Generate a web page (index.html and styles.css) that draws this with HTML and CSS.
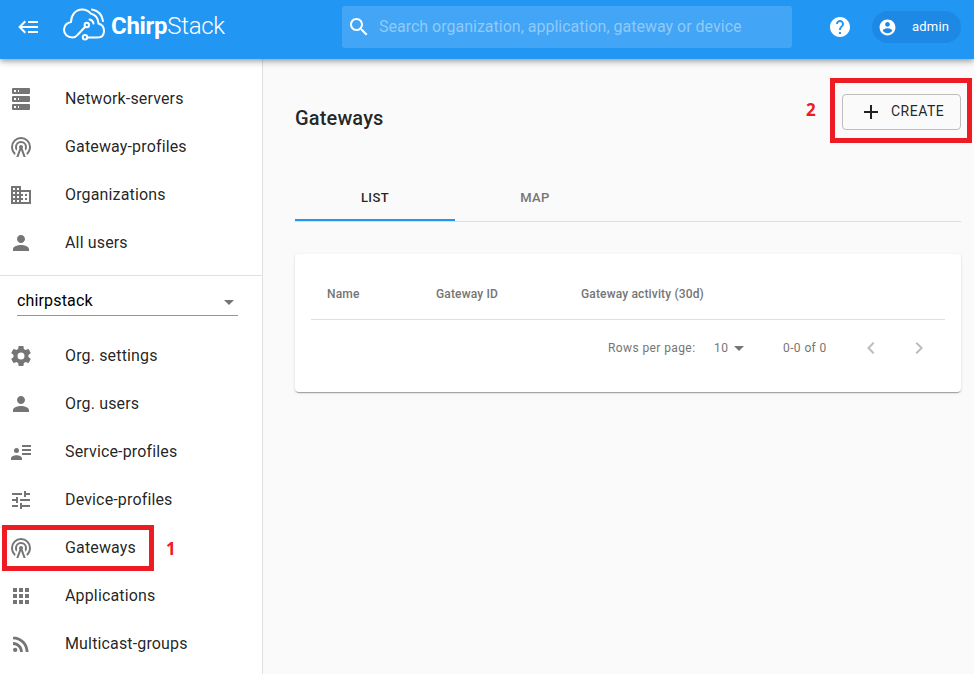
FILE: index.html
```html
<!DOCTYPE html>
<html lang="en">
<head>
<meta charset="utf-8">
<title>ChirpStack - Gateways</title>
<link rel="stylesheet" href="styles.css">
</head>
<body>
<svg class="defs" width="0" height="0" aria-hidden="true">
  <symbol id="server" viewBox="0 0 24 24"><path d="M4,1H20A1,1 0 0,1 21,2V6A1,1 0 0,1 20,7H4A1,1 0 0,1 3,6V2A1,1 0 0,1 4,1M4,9H20A1,1 0 0,1 21,10V14A1,1 0 0,1 20,15H4A1,1 0 0,1 3,14V10A1,1 0 0,1 4,9M4,17H20A1,1 0 0,1 21,18V22A1,1 0 0,1 20,23H4A1,1 0 0,1 3,22V18A1,1 0 0,1 4,17M9,5H10V3H9V5M9,13H10V11H9V13M9,21H10V19H9V21M5,3V5H7V3H5M5,11V13H7V11H5M5,19V21H7V19H5Z"/></symbol>
  <symbol id="tower" viewBox="0 0 24 24"><path d="M12,10A2,2 0 0,1 14,12C14,12.5 13.82,12.94 13.53,13.29L16.7,22H14.57L12,14.93L9.43,22H7.3L10.47,13.29C10.18,12.94 10,12.5 10,12A2,2 0 0,1 12,10M12,8A4,4 0 0,0 8,12C8,12.5 8.1,13 8.28,13.46L7.4,15.86C6.53,14.81 6,13.47 6,12A6,6 0 0,1 12,6A6,6 0 0,1 18,12C18,13.47 17.47,14.81 16.6,15.86L15.72,13.46C15.9,13 16,12.5 16,12A4,4 0 0,0 12,8M12,4A8,8 0 0,0 4,12C4,14.36 5,16.5 6.64,17.94L5.92,19.94C3.54,18.11 2,15.23 2,12A10,10 0 0,1 12,2A10,10 0 0,1 22,12C22,15.23 20.46,18.11 18.08,19.94L17.36,17.94C19,16.5 20,14.36 20,12A8,8 0 0,0 12,4Z"/></symbol>
  <symbol id="domain" viewBox="0 0 24 24"><path d="M18,15H16V17H18M18,11H16V13H18M20,19H12V17H14V15H12V13H14V11H12V9H20M10,7H8V5H10M10,11H8V9H10M10,15H8V13H10M10,19H8V17H10M6,7H4V5H6M6,11H4V9H6M6,15H4V13H6M6,19H4V17H6M12,7V3H2V21H22V7H12Z"/></symbol>
  <symbol id="person" viewBox="0 0 24 24"><path d="M12 12c2.21 0 4-1.79 4-4s-1.79-4-4-4-4 1.79-4 4 1.79 4 4 4zm0 2c-2.67 0-8 1.34-8 4v2h16v-2c0-2.66-5.33-4-8-4z"/></symbol>
  <symbol id="gear" viewBox="0 0 24 24"><path d="M12,15.5A3.5,3.5 0 0,1 8.5,12A3.5,3.5 0 0,1 12,8.5A3.5,3.5 0 0,1 15.5,12A3.5,3.5 0 0,1 12,15.5M19.43,12.97C19.47,12.65 19.5,12.33 19.5,12C19.5,11.67 19.47,11.34 19.43,11L21.54,9.37C21.73,9.22 21.78,8.95 21.66,8.73L19.66,5.27C19.54,5.05 19.27,4.96 19.05,5.05L16.56,6.05C16.04,5.66 15.5,5.32 14.87,5.07L14.5,2.42C14.46,2.18 14.25,2 14,2H10C9.75,2 9.54,2.18 9.5,2.42L9.13,5.07C8.5,5.32 7.96,5.66 7.44,6.05L4.95,5.05C4.73,4.96 4.46,5.05 4.34,5.27L2.34,8.73C2.21,8.95 2.27,9.22 2.46,9.37L4.57,11C4.53,11.34 4.5,11.67 4.5,12C4.5,12.33 4.53,12.65 4.57,12.97L2.46,14.63C2.27,14.78 2.21,15.05 2.34,15.27L4.34,18.73C4.46,18.95 4.73,19.03 4.95,18.95L7.44,17.94C7.96,18.34 8.5,18.68 9.13,18.93L9.5,21.58C9.54,21.82 9.75,22 10,22H14C14.25,22 14.46,21.82 14.5,21.58L14.87,18.93C15.5,18.67 16.04,18.34 16.56,17.94L19.05,18.95C19.27,19.03 19.54,18.95 19.66,18.73L21.66,15.27C21.78,15.05 21.73,14.78 21.54,14.63L19.43,12.97Z"/></symbol>
  <symbol id="details" viewBox="0 0 24 24"><circle cx="7.5" cy="10.5" r="2.5"/><path d="M13 5h9v2h-9zM13 9h9v2h-9zM13 13h9v2h-9zM2 20v-1.700c0-1.900 3.200-3.100 5.500-3.100s5.500 1.200 5.500 3.100V20z"/></symbol>
  <symbol id="tune" viewBox="0 0 24 24"><path d="M3,17V19H9V17H3M3,5V7H13V5H3M13,21V19H21V17H13V15H11V21H13M7,9V11H3V13H7V15H9V9H7M21,13V11H11V13H21M15,9H17V7H21V5H17V3H15V9Z"/></symbol>
  <symbol id="apps" viewBox="0 0 24 24"><path d="M4 8h4V4H4v4zm6 12h4v-4h-4v4zm-6 0h4v-4H4v4zm0-6h4v-4H4v4zm6 0h4v-4h-4v4zm6-10v4h4V4h-4zm-6 4h4V4h-4v4zm6 6h4v-4h-4v4zm0 6h4v-4h-4v4z"/></symbol>
  <symbol id="rss" viewBox="0 0 24 24"><circle cx="6.18" cy="17.82" r="2.18"/><path d="M4 4.440v2.830c7.030 0 12.730 5.700 12.730 12.730h2.830c0-8.590-6.970-15.560-15.560-15.560zm0 5.660v2.830c3.900 0 7.070 3.170 7.070 7.070h2.830c0-5.470-4.430-9.900-9.900-9.900z"/></symbol>
  <symbol id="drop" viewBox="0 0 24 24"><path d="M7 10l5 5 5-5z"/></symbol>
</svg>

<header class="topbar">
  <svg class="icon menu" viewBox="0 0 24 24"><path d="M5,13L9,17L7.6,18.42L1.18,12L7.6,5.58L9,7L5,11H21V13H5M21,6V8H11V6H21M21,16V18H11V16H21Z"/></svg>
  <div class="logo">
    <svg class="cloud" width="44" height="34" viewBox="0 0 44 34" fill="none" stroke="#fff" stroke-width="2" stroke-linecap="round">
      <path d="M23.200 19.800L15.500 28Q13.500 30.500 10.500 30.500C5.500 30.500 2 27.200 2 22.700C2 18.700 5 15.400 9 14.900C9.200 7.500 14 2.400 20 2.400C24 2.400 27 4.200 28.600 6.500C33 7.500 36.200 11 36.500 16.500C40 17.500 42 20.800 42 24C42 28 39.500 30.500 35.500 30.500H25.800"/>
      <circle cx="24.800" cy="18" r="2.200"/><circle cx="23" cy="30.300" r="2.200"/>
      <path d="M27.500 12.500Q31 13.200 31.500 16.500M30 2.600Q39.500 4.500 41 14"/>
    </svg>
    <span class="wordmark"><b>Chirp</b><span>Stack</span></span>
  </div>
  <div class="search">
    <svg class="icon" viewBox="0 0 24 24"><path d="M15.500 14h-.790l-.280-.270C15.410 12.590 16 11.110 16 9.500 16 5.910 13.090 3 9.500 3S3 5.910 3 9.500 5.910 16 9.500 16c1.610 0 3.090-.590 4.230-1.570l.270.280v.790l5 4.990L20.490 19l-4.990-5zm-6 0C7.010 14 5 11.990 5 9.500S7.010 5 9.500 5 14 7.010 14 9.500 11.990 14 9.500 14z"/></svg>
    <span>Search organization, application, gateway or device</span>
  </div>
  <svg class="icon help" viewBox="0 0 24 24"><path d="M12 2C6.480 2 2 6.480 2 12s4.480 10 10 10 10-4.480 10-10S17.520 2 12 2zm1 17h-2v-2h2v2zm2.070-7.750l-.900.920C13.450 12.900 13 13.500 13 15h-2v-.500c0-1.100.450-2.100 1.170-2.830l1.240-1.260c.370-.360.590-.860.590-1.410 0-1.100-.900-2-2-2s-2 .900-2 2H8c0-2.210 1.790-4 4-4s4 1.790 4 4c0 .880-.360 1.680-.930 2.250z"/></svg>
  <div class="chip">
    <svg class="avatar" viewBox="0 0 24 24"><path d="M12 2C6.480 2 2 6.480 2 12s4.480 10 10 10 10-4.480 10-10S17.520 2 12 2zm0 3c1.660 0 3 1.340 3 3s-1.340 3-3 3-3-1.340-3-3 1.340-3 3-3zm0 14.200c-2.500 0-4.710-1.280-6-3.220.030-1.990 4-3.080 6-3.080 1.990 0 5.970 1.090 6 3.080-1.290 1.940-3.500 3.220-6 3.220z"/></svg>
    <span>admin</span>
  </div>
</header>

<div class="body">
  <nav class="sidebar">
    <ul class="nav">
      <li><svg class="icon"><use href="#server"/></svg><span>Network-servers</span></li>
      <li><svg class="icon"><use href="#tower"/></svg><span>Gateway-profiles</span></li>
      <li><svg class="icon"><use href="#domain"/></svg><span>Organizations</span></li>
      <li><svg class="icon"><use href="#person"/></svg><span>All users</span></li>
    </ul>
    <div class="org">
      <div class="select"><span>chirpstack</span><svg class="icon"><use href="#drop"/></svg></div>
    </div>
    <ul class="nav">
      <li><svg class="icon"><use href="#gear"/></svg><span>Org. settings</span></li>
      <li><svg class="icon"><use href="#person"/></svg><span>Org. users</span></li>
      <li><svg class="icon"><use href="#details"/></svg><span>Service-profiles</span></li>
      <li><svg class="icon"><use href="#tune"/></svg><span>Device-profiles</span></li>
      <li class="marked"><svg class="icon"><use href="#tower"/></svg><span>Gateways</span><i class="frame frame-nav"></i><b class="step step-one">1</b></li>
      <li><svg class="icon"><use href="#apps"/></svg><span>Applications</span></li>
      <li><svg class="icon"><use href="#rss"/></svg><span>Multicast-groups</span></li>
    </ul>
  </nav>

  <main class="content">
    <div class="titlebar">
      <h1>Gateways</h1>
      <div class="create-wrap">
        <button class="create"><svg class="icon" viewBox="0 0 24 24"><path d="M19 13h-6v6h-2v-6H5v-2h6V5h2v6h6v2z"/></svg><span>CREATE</span></button>
        <i class="frame frame-create"></i><b class="step step-two">2</b>
      </div>
    </div>
    <div class="tabs">
      <div class="tab active">LIST</div>
      <div class="tab">MAP</div>
    </div>
    <section class="card">
      <div class="thead"><span>Name</span><span>Gateway ID</span><span>Gateway activity (30d)</span></div>
      <div class="pager">
        <span class="rows">Rows per page:</span>
        <span class="count">10</span>
        <svg class="icon"><use href="#drop"/></svg>
        <span class="range">0-0 of 0</span>
        <svg class="icon arrow" viewBox="0 0 24 24"><path d="M15.410 7.410L14 6l-6 6 6 6 1.410-1.410L10.830 12z"/></svg>
        <svg class="icon arrow" viewBox="0 0 24 24"><path d="M10 6L8.590 7.410 13.170 12l-4.580 4.590L10 18l6-6z"/></svg>
      </div>
    </section>
  </main>
</div>
</body>
</html>
```
FILE: styles.css
```css
* { box-sizing: border-box; }
body {
  margin: 0;
  height: 674px;
  overflow: hidden;
  display: flex;
  flex-direction: column;
  background: #fafafa;
  color: rgba(0, 0, 0, 0.87);
  font-family: Roboto, "Liberation Sans", sans-serif;
}
.defs { position: absolute; }
.icon { width: 24px; height: 24px; flex: none; fill: currentColor; }

.topbar {
  position: relative;
  z-index: 2;
  flex: none;
  display: flex;
  align-items: flex-start;
  height: 59px;
  padding-left: 17px;
  background: #2196f3;
  color: #fff;
  box-shadow: 0 2px 4px -1px rgba(0, 0, 0, 0.2), 0 4px 5px 0 rgba(0, 0, 0, 0.14), 0 1px 10px 0 rgba(0, 0, 0, 0.12);
}
.menu { margin-top: 15px; }
.logo { display: flex; width: 301px; padding-left: 21px; }
.cloud { flex: none; margin-top: 7px; }
.wordmark {
  margin: 10px 0 0 5px;
  font-size: 24px;
  line-height: 32px;
  white-space: nowrap;
  letter-spacing: -0.3px;
}
.wordmark b { font-weight: 700; }
.wordmark span { font-weight: 300; }
.search {
  display: flex;
  align-items: center;
  width: 450px;
  height: 42px;
  margin-top: 6px;
  padding-left: 5px;
  border-radius: 3px;
  background: #42a5f5;
}
.search span { margin-left: 8px; font-size: 16px; color: #90caf9; white-space: nowrap; transform: translateY(-1px); }
.help { margin: 15px 0 0 36px; }
.chip {
  display: flex;
  align-items: center;
  width: 89px;
  height: 32px;
  margin: 11px 0 0 20px;
  padding-left: 6px;
  border-radius: 16px;
  background: #1e88e5;
  font-size: 13px;
}
.avatar { width: 19px; height: 19px; fill: #fff; }
.chip span { margin-left: 15px; letter-spacing: 0.2px; transform: translateY(-1px); }

.body { display: flex; flex: 1; min-height: 0; }
.sidebar { width: 263px; flex: none; background: #fff; border-right: 1px solid #e0e0e0; padding-top: 15px; }
.nav { margin: 0; padding: 0; list-style: none; }
.nav li { position: relative; display: flex; align-items: center; height: 48px; padding-left: 9px; font-size: 16px; letter-spacing: 0.15px; }
.nav .icon { color: #757575; margin-top: 2px; }
.nav span { margin-left: 32px; }
.org { height: 66px; margin-top: 9px; padding: 8px 24px 0 17px; border-top: 1px solid #e0e0e0; margin-bottom: -10px; }
.select { display: flex; align-items: center; justify-content: space-between; height: 32px; border-bottom: 1px solid #949494; font-size: 16px; color: #000; letter-spacing: 0.15px; }
.select span { padding-top: 2px; }
.select .icon { color: #757575; margin: 4px -3px 0 0; }
.frame { position: absolute; border: 5px solid #ed1c24; }
.frame-nav { left: 2px; top: 2px; width: 152px; height: 46px; }
.step { position: absolute; color: #ed1c24; font: 700 17px/20px "Noto Sans", sans-serif; }
.step-one { left: 166px; top: 16px; }

.content { flex: 1; min-width: 0; padding: 35px 13px 0 32px; }
.titlebar { display: flex; align-items: flex-start; justify-content: space-between; height: 87px; }
h1 { margin: 12px 0 0; font-size: 20px; line-height: 24px; font-weight: 500; letter-spacing: 0.15px; }
.create-wrap { position: relative; }
.create {
  display: flex;
  align-items: center;
  width: 119px;
  height: 36px;
  padding: 0 0 0 16px;
  border: 1px solid #bdbdbd;
  border-radius: 4px;
  background: #fafafa;
  color: rgba(0, 0, 0, 0.87);
  font: 400 14px Roboto, sans-serif;
  letter-spacing: 0.5px;
}
.create span { margin-left: 8px; transform: translateY(-1px); }
.frame-create { left: -12px; top: -16px; width: 142px; height: 65px; }
.step-two { left: -36px; top: 6px; }
.tabs { display: flex; height: 41px; border-bottom: 1px solid #dedede; }
.tab { width: 160px; height: 40px; text-align: center; font-size: 13px; line-height: 34px; font-weight: 500; letter-spacing: 0.4px; color: #757575; }
.tab.active { color: rgba(0, 0, 0, 0.87); border-bottom: 2px solid #2196f3; }
.card {
  height: 138px;
  margin-top: 32px;
  padding: 10px 16px;
  border-radius: 4px;
  background: #fff;
  box-shadow: 0 2px 1px -1px rgba(0, 0, 0, 0.2), 0 1px 1px 0 rgba(0, 0, 0, 0.14), 0 1px 3px 0 rgba(0, 0, 0, 0.12);
}
.thead {
  display: grid;
  grid-template-columns: 109px 145px 1fr;
  align-items: center;
  height: 56px;
  padding: 4px 0 0 16px;
  border-bottom: 1px solid #e0e0e0;
  color: #757575;
  font-size: 12px;
  font-weight: 500;
  letter-spacing: 0.15px;
}
.pager { display: flex; align-items: center; justify-content: flex-end; height: 56px; padding-right: 14px; font-size: 12px; letter-spacing: 0.4px; color: #757575; white-space: nowrap; }
.rows { width: 106px; flex: none; }
.count { width: 13px; flex: none; }
.range { width: 76px; flex: none; margin-left: 32px; }
.arrow { color: #bdbdbd; }
.arrow + .arrow { margin-left: 24px; }
```
